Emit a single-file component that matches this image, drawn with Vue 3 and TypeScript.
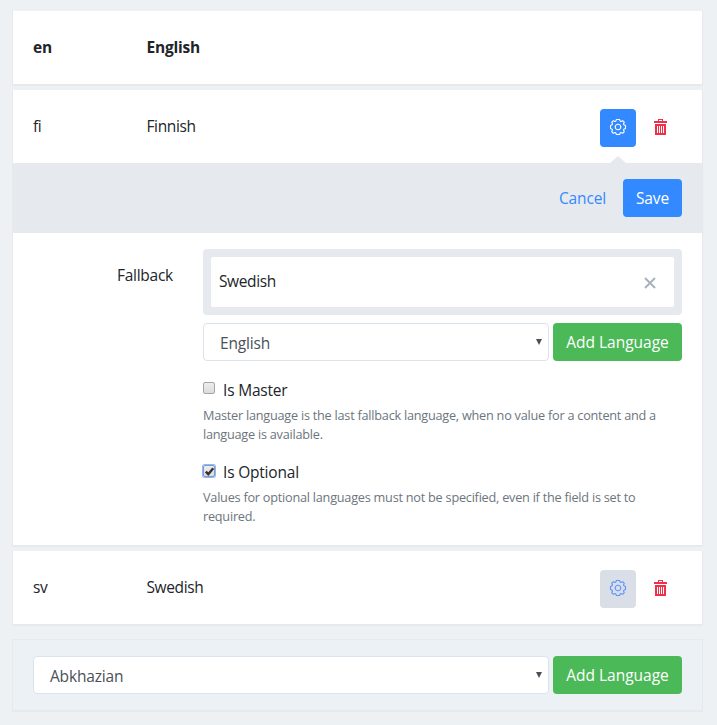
<script setup lang="ts">
import { ref } from 'vue'

const fallbackChoice = ref('English')
const newLanguage = ref('Abkhazian')
const isMaster = ref(false)
const isOptional = ref(true)

// Outline of the eight-toothed settings wheel, centred on the origin.
const gearPath =
  'M-1.6 -7.5H1.6L2.2 -5.9L3 -5.5L4.7 -6.3L6.3 -4.7L5.5 -3L5.9 -2.2L7.5 -1.6V1.6L5.9 2.2L5.5 3L6.3 4.7L4.7 6.3L3 5.5L2.2 5.9L1.6 7.5H-1.6L-2.2 5.9L-3 5.5L-4.7 6.3L-6.3 4.7L-5.5 3L-5.9 2.2L-7.5 1.6V-1.6L-5.9 -2.2L-5.5 -3L-6.3 -4.7L-4.7 -6.3L-3 -5.5L-2.2 -5.9Z'
const trashPath =
  'M4 0H9V2H13V4H0V2H4ZM5 1V2H8V1ZM1 5H12V16H1ZM3 7V14H4V7ZM5 7V14H6V7ZM7 7V14H8V7ZM9 7V14H10V7Z'
</script>

<template>
  <main class="page">
    <section class="card">
      <div class="row master">
        <span class="code">en</span>
        <span class="name">English</span>
      </div>
    </section>

    <section class="card">
      <div class="row">
        <span class="code">fi</span>
        <span class="name">Finnish</span>
        <button class="btn gear active" type="button" aria-label="Settings">
          <svg width="18" height="18" viewBox="-9 -9 18 18"><path :d="gearPath" /><circle r="2.8" /></svg>
        </button>
        <button class="trash" type="button" aria-label="Delete">
          <svg width="13" height="16" viewBox="0 0 13 16"><path :d="trashPath" fill-rule="evenodd" /></svg>
        </button>
      </div>

      <div class="actions">
        <button class="btn link" type="button"><span>Cancel</span></button>
        <button class="btn save" type="button"><span>Save</span></button>
      </div>

      <div class="details">
        <label class="label"><span>Fallback</span></label>
        <div class="fields">
          <div class="fallbacks">
            <div class="fallback">
              <span>Swedish</span>
              <svg class="close" width="12" height="12" viewBox="0 0 12 12"><path d="M1 1L11 11M11 1L1 11" /></svg>
            </div>
          </div>
          <div class="adder">
            <div class="select"><span>{{ fallbackChoice }}</span><i class="arrow" /></div>
            <button class="btn add" type="button"><span>Add Language</span></button>
          </div>

          <div class="check first">
            <span class="box" role="checkbox" :aria-checked="isMaster" />
            <span>Is Master</span>
          </div>
          <p class="hint">Master language is the last fallback language, when no value for a content and a<br />language is available.</p>

          <div class="check">
            <span class="box focused" role="checkbox" :aria-checked="isOptional">
              <svg v-if="isOptional" width="11" height="11" viewBox="0 0 11 11"><path d="M1.8 5.6L4.3 8.2L9.2 2.2" /></svg>
            </span>
            <span>Is Optional</span>
          </div>
          <p class="hint">Values for optional languages must not be specified, even if the field is set to<br />required.</p>
        </div>
      </div>
    </section>

    <section class="card">
      <div class="row">
        <span class="code">sv</span>
        <span class="name">Swedish</span>
        <button class="btn gear" type="button" aria-label="Settings">
          <svg width="18" height="18" viewBox="-9 -9 18 18"><path :d="gearPath" /><circle r="2.8" /></svg>
        </button>
        <button class="trash" type="button" aria-label="Delete">
          <svg width="13" height="16" viewBox="0 0 13 16"><path :d="trashPath" fill-rule="evenodd" /></svg>
        </button>
      </div>
    </section>

    <section class="footer">
      <div class="adder">
        <div class="select"><span>{{ newLanguage }}</span><i class="arrow" /></div>
        <button class="btn add" type="button"><span>Add Language</span></button>
      </div>
    </section>
  </main>
</template>

<style>
body {
  background: #edf1f4;
}
</style>

<style scoped>
* {
  box-sizing: border-box;
}
.page {
  height: 725px;
  padding: 11px 14px 0 12px;
  overflow: hidden;
  background: #edf1f4;
  color: #212529;
  font: 15.5px/24px "Open Sans", "Noto Sans", sans-serif;
  letter-spacing: -0.38px;
}
.card {
  margin-bottom: 4px;
  border: solid #e6e9ee;
  border-width: 0 1px 2px;
  background: #fff;
}
.row {
  display: flex;
  align-items: center;
  height: 73px;
  padding: 0 35px 0 20px;
}
.row .code,
.row .name {
  padding-bottom: 1px;
}
.row.master {
  font-weight: 700;
  letter-spacing: -0.2px;
}
.code {
  width: 113.5px;
}
.name {
  flex: 1;
}
.btn {
  display: flex;
  flex: none;
  align-items: center;
  justify-content: center;
  height: 38px;
  padding: 0;
  border: 0;
  border-radius: 4px;
  color: #fff;
  font: inherit;
  letter-spacing: 0;
  white-space: nowrap;
}
.btn.gear {
  width: 36px;
  margin-top: 2px;
  padding-bottom: 2px;
  background: #dadee6;
  color: #5c93ff;
}
.btn.gear.active {
  background: #3389ff;
  color: #fff;
}
.gear svg {
  fill: none;
  stroke: currentColor;
  stroke-width: 1.1;
  stroke-linejoin: round;
}
.trash {
  display: flex;
  margin-left: 18px;
  padding: 1px 0 0;
  border: 0;
  background: none;
}
.trash svg {
  fill: #ee3048;
}
.actions {
  position: relative;
  display: flex;
  align-items: center;
  justify-content: flex-end;
  gap: 17px;
  height: 70px;
  margin: 0 -1px;
  padding-right: 21px;
  background: #e6e9ee;
}
.actions::before {
  position: absolute;
  top: -7px;
  right: 77px;
  border: solid transparent;
  border-width: 0 8px 7px;
  border-bottom-color: #e6e9ee;
  content: "";
}
.btn.link {
  background: none;
  color: #3389ff;
  letter-spacing: -0.15px;
}
.btn.save {
  width: 59px;
  background: #3389ff;
  letter-spacing: -0.1px;
}
.details {
  display: flex;
  height: 312px;
  padding: 16px 20px 0;
}
.label {
  width: 140px;
  margin-right: 30px;
  padding-top: 14px;
  letter-spacing: -0.25px;
  text-align: right;
}
.fields {
  flex: 1;
}
.fallbacks {
  padding: 8px;
  border-radius: 4px;
  background: #e6e9ee;
}
.fallback {
  display: flex;
  align-items: center;
  justify-content: space-between;
  height: 50px;
  padding: 0 18px 2px 8px;
  border-radius: 2px;
  background: #fff;
}
.close {
  margin-top: 3px;
  fill: none;
  stroke: #a9b2bc;
  stroke-width: 2;
}
.adder {
  display: flex;
  gap: 4px;
}
.fields .adder {
  margin: 8px 0 17px;
}
.select {
  display: flex;
  flex: 1;
  align-items: center;
  justify-content: space-between;
  height: 38px;
  padding: 2px 6px 0 16px;
  border: 1px solid #dbe4eb;
  border-radius: 4px;
  background: #fff;
  color: #495057;
  letter-spacing: -0.18px;
}
.arrow {
  margin-top: -3px;
  border: solid transparent;
  border-width: 6px 3px 0;
  border-top-color: #495057;
}
.btn.add {
  width: 129px;
  background: #4cb958;
}
.check {
  display: flex;
  align-items: center;
  gap: 7px;
  height: 24px;
  letter-spacing: -0.2px;
}
.check.first .box {
  margin-top: -4px;
}
.box {
  width: 12px;
  height: 12px;
  margin: -2px 1px 0 0;
  border: 1px solid #a6a6a6;
  border-radius: 2px;
  background: linear-gradient(#ededed, #dcdcdc);
}
.box svg {
  display: block;
  margin: -0.5px;
  fill: none;
  stroke: #333;
  stroke-width: 2.4;
}
.focused {
  border-color: #7e9ac8;
  box-shadow: 0 0 0 1px #8fb6f5;
}
.hint {
  margin: 4px 0 16px;
  color: #6c757d;
  font-size: 12.7px;
  line-height: 19px;
  letter-spacing: -0.235px;
  white-space: nowrap;
}
.footer {
  height: 73px;
  margin-top: 13px;
  padding: 16px 20px 0;
  border: 1px solid #e6e9ee;
  border-bottom-width: 2px;
  background: #ecf1f5;
}
</style>
